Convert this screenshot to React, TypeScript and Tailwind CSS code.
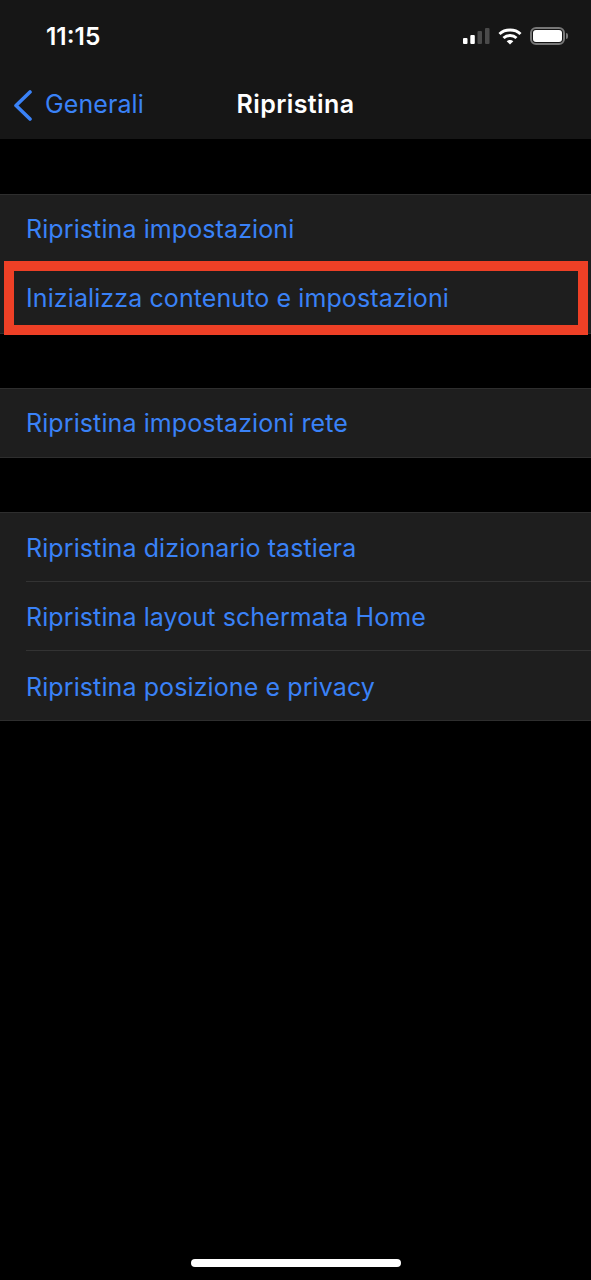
const font = { fontFamily: 'Inter, "Liberation Sans", sans-serif' };

function Row({ label, divider, height = 'h-[69px]', pad = 'pt-[1px]' }: { label: string; divider?: boolean; height?: string; pad?: string }) {
  return (
    <div className="pl-[26px] bg-[#1e1e1e]">
      <div className={`${height} ${pad} flex items-center text-[25px] tracking-[0.1px] text-[#3a82f7] ${divider ? 'border-b border-[#333333]' : ''}`}>
        {label}
      </div>
    </div>
  );
}

function Group({ children }: { children: React.ReactNode }) {
  return <div className="border-y border-[#2e2e2e] bg-[#1e1e1e]">{children}</div>;
}

function StatusIcons() {
  return (
    <div className="flex items-center gap-[8px]">
      <svg width="27" height="16" viewBox="0 0 27 16">
        <rect x="0" y="10" width="4.500" height="6" rx="1" fill="#fff" />
        <rect x="7.300" y="7" width="4.500" height="9" rx="1" fill="#fff" />
        <rect x="14.500" y="3" width="4.500" height="13" rx="1" fill="#4a4a4a" />
        <rect x="22" y="0" width="4.500" height="16" rx="1" fill="#4a4a4a" />
      </svg>
      <svg width="24" height="17" viewBox="0 0 24 17" fill="none" stroke="#fff" strokeWidth="3">
        <path d="M1.500 6 C7 0.800 17 0.800 22.500 6" />
        <path d="M5.500 10 C9 6.800 15 6.800 18.500 10" />
        <path d="M12 16.500 L8.700 13.200 C10.500 11.600 13.500 11.600 15.300 13.200 Z" fill="#fff" stroke="none" />
      </svg>
      <div className="flex items-center gap-[1px]">
        <div className="w-[35px] h-[18px] rounded-[6px] border-2 border-[#777777] p-[1px]">
          <div className="w-full h-full rounded-[3px] bg-white" />
        </div>
        <div className="w-[2px] h-[6px] rounded-r-full bg-[#777777]" />
      </div>
    </div>
  );
}

export default function App() {
  return (
    <div className="relative h-[1280px] w-[591px] overflow-hidden bg-black" style={font}>
      <div className="h-[139px] bg-[#161616] text-white">
        <div className="h-[72px] flex items-center justify-between pl-[46px] pr-[23px]">
          <span className="text-[24.5px] font-semibold tracking-[0px]">11:15</span>
          <StatusIcons />
        </div>
        <div className="relative h-[64px] flex items-center justify-center">
          <div className="absolute left-[13px] top-[14px] flex items-center gap-[12px] text-[#3a82f7]">
            <svg width="20" height="32" viewBox="0 0 20 32" fill="none" stroke="currentColor" strokeWidth="3.600" strokeLinecap="round" strokeLinejoin="round">
              <path d="M17 3 L3 16.500 L17 30" />
            </svg>
            <span className="text-[25px] tracking-[0.1px]">Generali</span>
          </div>
          <span className="pt-[1px] text-[25px] font-semibold tracking-[0.4px]">Ripristina</span>
        </div>
      </div>

      <div className="pt-[55px] flex flex-col gap-[54px]">
        <Group>
          <Row label="Ripristina impostazioni" />
          <Row label="Inizializza contenuto e impostazioni" />
        </Group>
        <Group>
          <Row label="Ripristina impostazioni rete" height="h-[68px]" />
        </Group>
        <Group>
          <Row label="Ripristina dizionario tastiera" divider pad="pt-[3px]" />
          <Row label="Ripristina layout schermata Home" divider pad="pt-[3px]" />
          <Row label="Ripristina posizione e privacy" pad="pt-[4px]" />
        </Group>
      </div>

      {/* red annotation over the second row */}
      <div className="absolute left-[4px] top-[260.500px] w-[584px] h-[74px] border-[10px] border-[#ee4026]" />

      <div className="absolute left-[191px] bottom-[13px] w-[210px] h-[8px] rounded-full bg-white" />
    </div>
  );
}
